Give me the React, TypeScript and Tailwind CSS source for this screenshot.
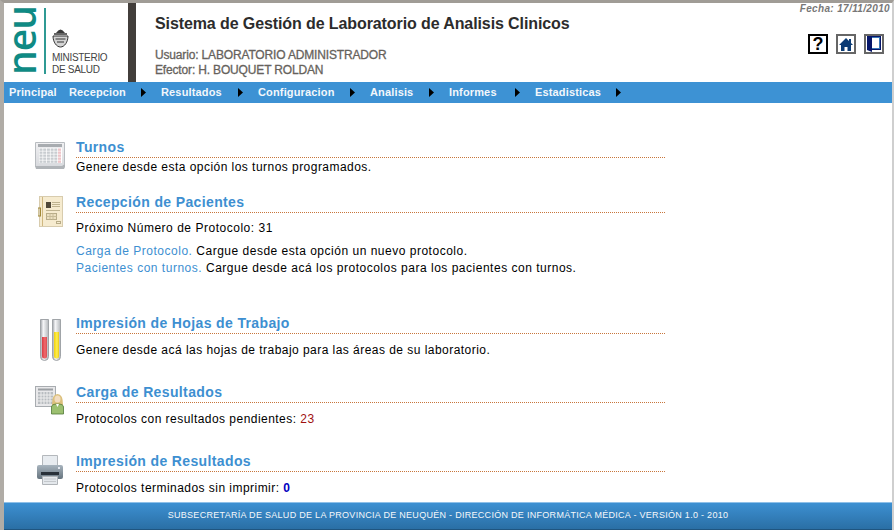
import React from "react";

const Arrow = () => (
  <svg width="5" height="9" viewBox="0 0 5 9" className="shrink-0"><path d="M0 0 L5 4.500 L0 9 Z" fill="#000" /></svg>
);

const menu: [string, number][] = [
  ["Principal", 60],
  ["Recepcion", 92],
  ["Resultados", 97],
  ["Configuracion", 112],
  ["Analisis", 79],
  ["Informes", 86],
  ["Estadisticas", 101],
];

function Calendar() {
  return (
    <svg width="31" height="29" viewBox="0 0 31 29">
      <defs>
        <linearGradient id="calBase" x1="0" y1="0" x2="0" y2="1"><stop offset="0" stopColor="#f0f0f2" /><stop offset="1" stopColor="#d8dade" /></linearGradient>
      </defs>
      <path d="M0.500 1.500h29v22l-2 2H0.500z" fill="url(#calBase)" stroke="#b8bcc0" />
      <rect x="3" y="3" width="24" height="3" fill="#a8acb0" />
      <rect x="4" y="7" width="23" height="15" fill="#fff" />
      {[0, 1, 2, 3, 4].map((r) =>
        [0, 1, 2, 3, 4, 5].map((c) => (
          <rect key={`${r}${c}`} x={4.5 + c * 3.7} y={7.500 + r * 3} width="3" height="2.300" fill={c === 5 ? "#eec4c8" : "#c8ccd0"} />
        ))
      )}
      <path d="M0 25h27l3-2v3l-1 2H1z" fill="#b0b4b8" />
    </svg>
  );
}

function Folder() {
  return (
    <svg width="25" height="31" viewBox="0 0 25 31">
      <rect x="1.500" y="0.500" width="23" height="30" fill="#f6ebcf" stroke="#d8ccae" />
      <rect x="4" y="1" width="1" height="29" fill="#d0b880" />
      <rect x="0" y="12" width="2.500" height="8" fill="none" stroke="#a08838" />
      <rect x="8" y="6" width="5" height="6" fill="#504838" />
      <path d="M14 6.500h8M14 8.500h8M14 10.500h8M8 14.500h14" stroke="#c0b490" />
      <rect x="8.500" y="17.500" width="10" height="6" fill="#ece0c0" stroke="#b8ac88" />
      <path d="M8.500 20.500h10M12 17.500v6M15 17.500v6" stroke="#c8bc98" />
      <rect x="18.500" y="25.500" width="4" height="2" fill="none" stroke="#b8ac88" />
    </svg>
  );
}

function Tubes() {
  return (
    <svg width="21" height="43" viewBox="0 0 21 43">
      <defs>
        <linearGradient id="glass" x1="0" y1="0" x2="1" y2="0"><stop offset="0" stopColor="#9ea2a8" /><stop offset="0.35" stopColor="#f6f6f8" /><stop offset="1" stopColor="#b4b8bc" /></linearGradient>
        <linearGradient id="red" x1="0" y1="0" x2="1" y2="0"><stop offset="0" stopColor="#d83c44" /><stop offset="0.6" stopColor="#f06a6e" /><stop offset="1" stopColor="#d84a50" /></linearGradient>
        <linearGradient id="yel" x1="0" y1="0" x2="1" y2="0"><stop offset="0" stopColor="#f0d010" /><stop offset="0.6" stopColor="#fff050" /><stop offset="1" stopColor="#e8c810" /></linearGradient>
      </defs>
      <path d="M0.500 0.500h8v37a4 4 0 0 1-8 0z" fill="url(#glass)" stroke="#a0a4a8" />
      <path d="M2 18h5v19a2.500 2.500 0 0 1-5 0z" fill="url(#red)" />
      <path d="M12.500 0.500h8v37a4 4 0 0 1-8 0z" fill="url(#glass)" stroke="#a0a4a8" />
      <path d="M14 13h5v24a2.500 2.500 0 0 1-5 0z" fill="url(#yel)" />
    </svg>
  );
}

function Results() {
  return (
    <svg width="30" height="29" viewBox="0 0 30 29">
      <rect x="0.500" y="0.500" width="20" height="20" fill="#e8e8ea" stroke="#a8acb0" />
      <rect x="3" y="2.500" width="15" height="2" fill="#9ca0a4" />
      <rect x="3" y="6" width="15" height="12" fill="#b8bcc0" />
      <path d="M3 9h15M3 12h15M3 15h15M6 6v12M9 6v12M12 6v12M15 6v12" stroke="#eee" />
      <path d="M17 19q0-11 5.500-11t5.500 11z" fill="#dcc07c" />
      <ellipse cx="22.500" cy="13" rx="3" ry="3.500" fill="#f2dcc0" />
      <path d="M16.500 28v-7q0-3 6-3t6 3v7z" fill="#9cc070" stroke="#507838" strokeWidth="0.800" />
      <path d="M21 18l1.500 3 1.500-3z" fill="#fff" />
    </svg>
  );
}

function Printer() {
  return (
    <svg width="26" height="30" viewBox="0 0 26 30">
      <defs>
        <linearGradient id="prn" x1="0" y1="0" x2="0" y2="1"><stop offset="0" stopColor="#a8b4be" /><stop offset="1" stopColor="#66747e" /></linearGradient>
      </defs>
      <path d="M5.500 0.500h15v10h-15z" fill="#e8ecf0" stroke="#b4b8bc" />
      <path d="M2 10h22q2 0 2 2v10q0 2-2 2H2q-2 0-2-2V12q0-2 2-2z" fill="url(#prn)" />
      <rect x="4" y="17" width="18" height="3" fill="#283038" />
      <path d="M5.500 21.500h15v8h-15z" fill="#e4e8ec" stroke="#b0b4b8" />
      <path d="M7 24h12M7 26.500h12" stroke="#c4c8cc" />
      <rect x="21" y="12" width="2" height="2" fill="#e4e8f0" />
    </svg>
  );
}

function Emblem() {
  return (
    <svg width="17" height="20" viewBox="0 0 17 20">
      <path d="M4 5q4.500-7 9 0z" fill="#3a3a3a" />
      <rect x="2" y="5" width="13" height="2" fill="#666" />
      <path d="M1 8h15c0 6-3.500 11-7.500 11S1 14 1 8z" fill="#d4d4d4" stroke="#333" />
      <path d="M3.500 11h10M5 14h7" stroke="#333" />
    </svg>
  );
}

function Section({
  icon,
  title,
  children,
  bodyClass = "mt-[2px]",
  className = "",
}: {
  icon: React.ReactNode;
  title: string;
  children: React.ReactNode;
  bodyClass?: string;
  className?: string;
}) {
  return (
    <div className={`flex ${className}`}>
      <div className="w-[52px] ml-[20px] flex justify-center items-start shrink-0">{icon}</div>
      <div className="w-[589px]">
        <div className="text-[14px] leading-[17px] font-bold text-[#3d8fd1] tracking-[0.37px] border-b border-dotted border-[#c8763c] pb-[1px]">
          {title}
        </div>
        <div className={`text-[12px] leading-[14px] text-black tracking-[0.46px] ${bodyClass}`}>{children}</div>
      </div>
    </div>
  );
}

export default function App() {
  return (
    <div className="w-[894px] h-[530px] overflow-hidden bg-white flex flex-col border-t-[3px] border-t-[#a09c96] border-l-[4px] border-l-[#b0aca6] border-r-[2px] border-r-[#cfcfcf] font-['Liberation_Sans',Arial,sans-serif]">
      <header className="h-[79px] flex shrink-0">
        <div className="w-[124px] h-full flex items-center">
          <div className="w-[40px] h-full flex items-center justify-center pr-[6px] pb-[3px]">
            <span className="block shrink-0 whitespace-nowrap [writing-mode:vertical-rl] rotate-180 text-[39px] leading-[42px] font-semibold text-[#0f8a84] font-['Open_Sans',sans-serif] tracking-[-1px]">neu</span>
          </div>
          <div className="w-[2px] h-[66px] bg-[#2f9a94] mb-[3px]" />
          <div className="flex flex-col items-start ml-[6px] pt-[19px]">
            <Emblem />
            <div className="text-[10px] leading-[12px] tracking-[-0.3px] text-[#444] mt-[4px]">MINISTERIO<br />DE SALUD</div>
          </div>
        </div>
        <div className="w-[8px] h-full bg-[#423e3b] shrink-0" />
        <div className="flex-1 relative pl-[19px]">
          <h1 className="text-[16px] leading-[18px] font-bold text-[#2c2c2c] mt-[12px] tracking-[-0.1px]">Sistema de Gestión de Laboratorio de Analisis Clinicos</h1>
          <div className="mt-[15px] text-[12px] leading-[15px] tracking-[-0.16px] text-[#66625c] [-webkit-text-stroke:0.3px_#66625c]">
            <div>Usuario: LABORATORIO ADMINISTRADOR</div>
            <div>Efector: H. BOUQUET ROLDAN</div>
          </div>
          <div className="absolute right-[2px] top-0 text-[10px] leading-[11px] italic font-bold text-[#777] tracking-[0.35px]">Fecha: 17/11/2010</div>
          <div className="absolute right-[8px] top-[31px] flex gap-[8px]">
            <div className="w-[20px] h-[20px] border-2 border-black flex items-center justify-center text-[18px] font-bold leading-none text-black">?</div>
            <div className="w-[20px] h-[20px] border-2 border-[#666] flex items-center justify-center">
              <svg width="14" height="13" viewBox="0 0 14 13"><path d="M7 0L10 3V1h2v4l2 2h-2v6H8.500V9h-3v4H2V7H0z" fill="#0a3a74" /></svg>
            </div>
            <div className="w-[20px] h-[20px] border-2 border-[#666] flex items-center justify-center">
              <svg width="14" height="16" viewBox="0 0 14 16"><path d="M0 0h14v14H5v2L0 14z" fill="#06166a" /><rect x="5" y="1.500" width="7" height="11" fill="#fff" /><path d="M5 1h8v12H5v-1h7V2H5z" fill="#3a78b8" /></svg>
            </div>
          </div>
        </div>
      </header>

      <nav className="h-[21px] bg-[#3d92d4] flex items-center pl-[5px] shrink-0 text-[11px] font-bold text-[#f2f7fb] tracking-[0.15px]">
        {menu.map(([label, width]) => (
          <div key={label} className="flex items-center justify-between pr-[15px] shrink-0" style={{ width }}>
            <span className="whitespace-nowrap">{label}</span>
            {label !== "Principal" && <Arrow />}
          </div>
        ))}
      </nav>

      <main className="flex-1 min-h-0 pt-[36px] flex flex-col">
        <Section icon={<div className="mt-[2px]"><Calendar /></div>} title="Turnos" bodyClass="mt-[2px]">
          Genere desde esta opción los turnos programados.
        </Section>
        <Section icon={<div className="mt-[2px]"><Folder /></div>} title="Recepción de Pacientes" className="mt-[20px]" bodyClass="mt-[8px]">
          <div className="tracking-[0.52px]">Próximo Número de Protocolo: 31</div>
          <div className="mt-[8px] leading-[17px] tracking-[0.51px]">
            <div><span className="text-[#3d8fd1]">Carga de Protocolo.</span> Cargue desde esta opción un nuevo protocolo.</div>
            <div><span className="text-[#3d8fd1]">Pacientes con turnos.</span> Cargue desde acá los protocolos para los pacientes con turnos.</div>
          </div>
        </Section>
        <Section icon={<div className="mt-[4px]"><Tubes /></div>} title="Impresión de Hojas de Trabajo" className="mt-[38px]" bodyClass="mt-[9px]">
          Genere desde acá las hojas de trabajo para las áreas de su laboratorio.
        </Section>
        <Section icon={<div className="mt-[2px]"><Results /></div>} title="Carga de Resultados" className="mt-[22px]" bodyClass="mt-[9px]">
          Protocolos con resultados pendientes: <span className="text-[#a01010]">23</span>
        </Section>
        <Section icon={<div className="mt-[2px]"><Printer /></div>} title="Impresión de Resultados" className="mt-[27px]" bodyClass="mt-[9px]">
          Protocolos terminados sin imprimir: <span className="text-[#0000c0] font-bold">0</span>
        </Section>
      </main>

      <footer className="h-[28px] shrink-0 bg-gradient-to-b from-[#3d90d2] to-[#2a6fa5] border-t border-t-[#8fc0e8] border-b border-b-[#1f5580] flex items-center justify-center text-[9px] text-[#f4f8fb] tracking-[0.29px]">
        SUBSECRETARÍA DE SALUD DE LA PROVINCIA DE NEUQUÉN - DIRECCIÓN DE INFORMÁTICA MÉDICA - VERSIÓN 1.0 - 2010
      </footer>
    </div>
  );
}
